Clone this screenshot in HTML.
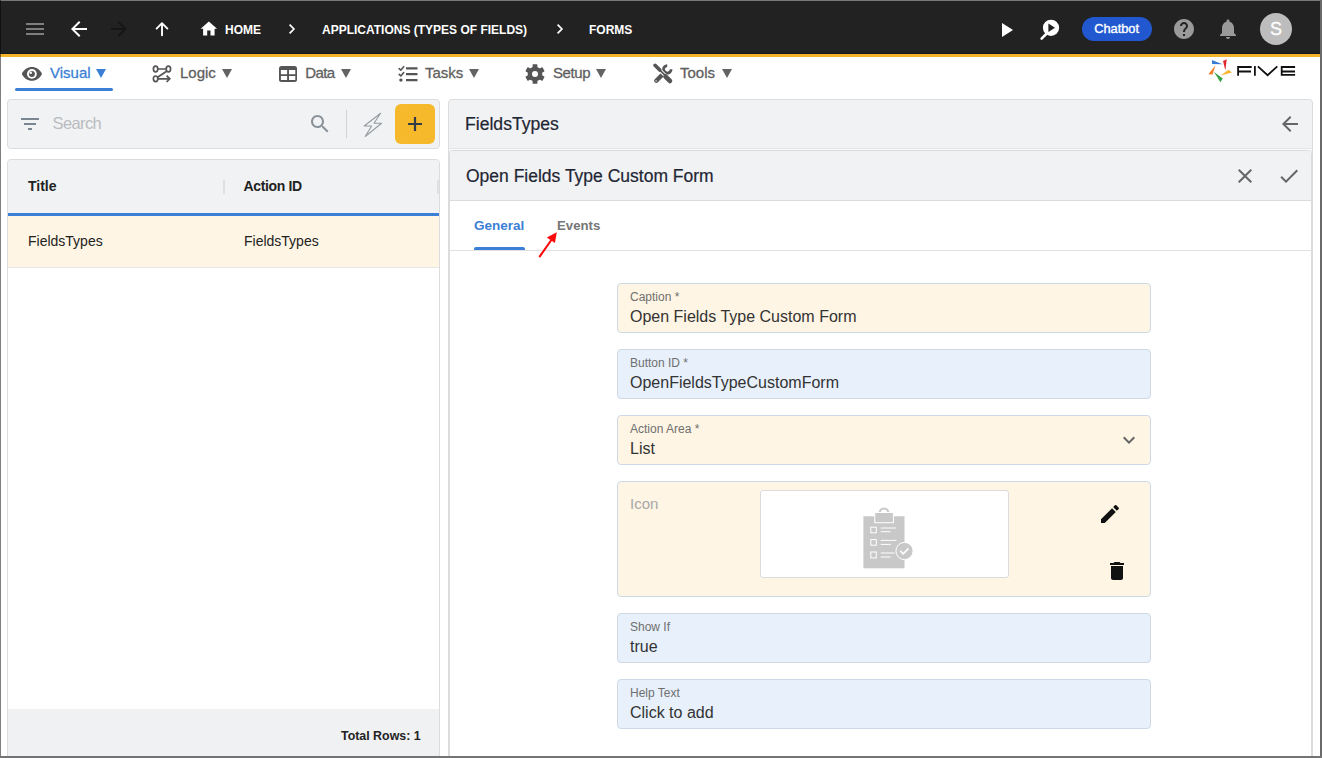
<!DOCTYPE html>
<html><head><meta charset="utf-8">
<style>
*{box-sizing:border-box;margin:0;padding:0}
html,body{width:1322px;height:758px;overflow:hidden;background:#fff;font-family:"Liberation Sans",sans-serif;position:relative}
.a{position:absolute}
.t{position:absolute;white-space:nowrap;line-height:1}
#top{left:0;top:0;width:1322px;height:54px;background:#222222}
#ybar{left:0;top:54px;width:1322px;height:3px;background:#f5b52a}
.crumb{color:#fff;font-weight:bold;font-size:12px}
.nav{color:#606060;font-size:15px;-webkit-text-stroke:0.3px}
.tri{font-size:12px;color:#636363}
.card{background:#f1f2f4;border:1px solid #dcdcdc;border-radius:4px}
.field{position:absolute;left:617px;width:534px;height:50px;border:1px solid #cdd9e6;border-radius:4px}
.cream{background:#fef5e4}
.blue{background:#e7f0fb}
.lbl{position:absolute;left:12px;top:7px;font-size:12px;color:#6f6f6f;line-height:1;white-space:nowrap}
.val{position:absolute;left:12px;top:25px;font-size:16px;color:#333;line-height:1;white-space:nowrap}
</style></head><body>
<!-- top bar -->
<div id="top" class="a"></div>
<div id="ybar" class="a"></div>
<div class="a" style="left:0;top:53px;width:1322px;height:1px;background:#161a20"></div>

<!-- hamburger -->
<div class="a" style="left:26px;top:23px;width:18px;height:2px;background:#7e7e7e"></div>
<div class="a" style="left:26px;top:28px;width:18px;height:2px;background:#7e7e7e"></div>
<div class="a" style="left:26px;top:33px;width:18px;height:2px;background:#7e7e7e"></div>
<!-- back arrow -->
<svg class="a" style="left:67px;top:17px" width="24" height="24" viewBox="0 0 24 24"><path d="M20 11H7.83l5.59-5.59L12 4l-8 8 8 8 1.41-1.41L7.83 13H20v-2z" fill="#fff"/></svg>
<svg class="a" style="left:107px;top:17px" width="24" height="24" viewBox="0 0 24 24"><path d="M12 4l-1.41 1.41L16.17 11H4v2h12.17l-5.58 5.59L12 20l8-8z" fill="#161616"/></svg>
<svg class="a" style="left:150px;top:17px" width="24" height="24" viewBox="150 17 24 24"><path d="M162 23.5V35.3M156.6 28.6L162 23.2L167.4 28.6" stroke="#fff" stroke-width="1.9" fill="none" stroke-linecap="round" stroke-linejoin="round"/></svg>
<!-- home -->
<svg class="a" style="left:199.2px;top:19.1px" width="19.7" height="19.7" viewBox="0 0 24 24"><path d="M10 20v-6h4v6h5v-8h3L12 3 2 12h3v8z" fill="#fff"/></svg>
<div class="t crumb" style="left:225px;top:24px">HOME</div>
<svg class="a" style="left:286px;top:22px" width="12" height="14" viewBox="0 0 12 14"><path d="M3.6 2.7l4.3 4.3-4.3 4.3" stroke="#fff" stroke-width="1.7" fill="none"/></svg>
<div class="t crumb" style="left:322px;top:24px">APPLICATIONS (TYPES OF FIELDS)</div>
<svg class="a" style="left:554px;top:22px" width="12" height="14" viewBox="0 0 12 14"><path d="M3.6 2.7l4.3 4.3-4.3 4.3" stroke="#fff" stroke-width="1.7" fill="none"/></svg>
<div class="t crumb" style="left:589px;top:24px">FORMS</div>

<!-- right top icons -->
<svg class="a" style="left:1000px;top:21px" width="16" height="18" viewBox="0 0 16 18"><path d="M2 2v14l11-7z" fill="#fff"/></svg>
<svg class="a" style="left:1038px;top:16px" width="26" height="26" viewBox="1038 16 26 26"><circle cx="1051" cy="27.8" r="8.1" fill="#fff"/><path d="M1048.4 23.6v8.4l6.6-4.2z" fill="#222"/><path d="M1041.6 38.6l4.6-4.6" stroke="#fff" stroke-width="2.6" stroke-linecap="round"/></svg>
<div class="a" style="left:1082px;top:17px;width:70px;height:24px;border-radius:12px;background:#2158d0"></div>
<div class="t" style="left:1094.2px;top:23.4px;font-size:12.8px;-webkit-text-stroke:0.35px #fff;color:#fff">Chatbot</div>
<svg class="a" style="left:1172px;top:17px" width="24" height="24" viewBox="0 0 24 24"><path fill="#9a9a9a" d="M12 2C6.48 2 2 6.48 2 12s4.48 10 10 10 10-4.48 10-10S17.52 2 12 2zm1 17h-2v-2h2v2zm2.07-7.75l-.9.92C13.45 12.9 13 13.5 13 15h-2v-.5c0-1.1.45-2.1 1.17-2.83l1.24-1.26c.37-.36.59-.86.59-1.41 0-1.1-.9-2-2-2s-2 .9-2 2H8c0-2.21 1.79-4 4-4s4 1.79 4 4c0 .88-.36 1.68-.93 2.25z"/></svg>
<svg class="a" style="left:1216px;top:17px" width="24" height="24" viewBox="0 0 24 24"><path d="M12 22c1.1 0 2-.9 2-2h-4c0 1.1.9 2 2 2zm6-6v-5c0-3.07-1.64-5.64-4.5-6.32V4c0-.83-.67-1.5-1.5-1.5s-1.5.67-1.5 1.5v.68C7.63 5.36 6 7.92 6 11v5l-2 2v1h16v-1l-2-2z" fill="#9a9a9a"/></svg>
<div class="a" style="left:1260px;top:13px;width:32px;height:32px;border-radius:50%;background:#bdbdbd"></div>
<div class="t" style="left:1270px;top:20px;font-size:18px;color:#fff;-webkit-text-stroke:0.3px #fff">S</div>

<!-- logo -->
<svg class="a" style="left:1204px;top:56px" width="100" height="32" viewBox="1204 56 100 32">
<g transform="translate(1204 56)">
<path d="M7.9 4L8.1 8.1L18.6 8.3Z" fill="#3a7bd5"/>
<path d="M19 4.9L22.7 3.2L21.4 14.4Z" fill="#e0282c"/>
<path d="M24.5 13.8L27.9 16.4L16.6 19.6Z" fill="#f6b52b"/>
<path d="M10.1 16L18.8 22.5L16.4 26.3Z" fill="#39a247"/>
<path d="M11.5 9.3L4.4 18.2L8.5 18.6Z" fill="#f47a22"/>
</g>
<g fill="none" stroke="#111" stroke-width="1.8">
<path d="M1238.1 75.8V67H1251.7M1238.1 71.5H1251"/>
<path d="M1254.9 66.1V75.8"/>
<path d="M1257.9 66.3L1267.6 75.2L1277.3 66.3"/>
<path d="M1295.1 67H1281.7V74.9H1295.1M1281.7 71.5H1295"/>
</g>
</svg>
<!-- nav row -->
<svg class="a" style="left:20px;top:62px" width="24" height="24" viewBox="20 62 24 24">
<path d="M21.8 73.9C23.8 69.8 27.7 67.1 31.9 67.1S40 69.8 42 73.9C40 78 36.1 80.7 31.9 80.7S23.8 78 21.8 73.9Z" fill="#555"/>
<circle cx="31.9" cy="73.9" r="4.9" fill="#fff"/>
<circle cx="31.9" cy="73.9" r="3.0" fill="#555"/>
<circle cx="30.7" cy="72.7" r="1.3" fill="#fff"/>
</svg>
<div class="t nav" style="left:50px;top:65px;color:#3b7fd6">Visual</div>
<svg class="a" style="left:96px;top:69px" width="10" height="9" viewBox="0 0 10 9"><path d="M0 0H10L5 9z" fill="#3b7fd6"/></svg>
<div class="a" style="left:15px;top:88px;width:98px;height:3px;border-radius:2px;background:#3b7fd6"></div>

<div class="t nav" style="left:180px;top:65px">Logic</div>
<svg class="a" style="left:221.5px;top:69px" width="10" height="9" viewBox="0 0 10 9"><path d="M0 0H10L5 9z" fill="#636363"/></svg>
<div class="t nav" style="left:305.2px;top:65px;letter-spacing:-0.6px">Data</div>
<svg class="a" style="left:341.2px;top:69px" width="10" height="9" viewBox="0 0 10 9"><path d="M0 0H10L5 9z" fill="#636363"/></svg>
<div class="t nav" style="left:425px;top:65px">Tasks</div>
<svg class="a" style="left:469.4px;top:69px" width="10" height="9" viewBox="0 0 10 9"><path d="M0 0H10L5 9z" fill="#636363"/></svg>
<div class="t nav" style="left:553px;top:65px;letter-spacing:-0.4px">Setup</div>
<svg class="a" style="left:596.4px;top:69px" width="10" height="9" viewBox="0 0 10 9"><path d="M0 0H10L5 9z" fill="#636363"/></svg>
<div class="t nav" style="left:680px;top:65px">Tools</div>
<svg class="a" style="left:721.6px;top:69px" width="10" height="9" viewBox="0 0 10 9"><path d="M0 0H10L5 9z" fill="#636363"/></svg>


<!-- nav icons -->
<svg class="a" style="left:148px;top:60px" width="28" height="28" viewBox="148 60 28 28" fill="none" stroke="#555" stroke-width="1.7">
<ellipse cx="155.6" cy="69" rx="2.2" ry="2.8"/><ellipse cx="168.4" cy="69" rx="2.2" ry="2.8"/><ellipse cx="155.6" cy="78.8" rx="2.2" ry="2.8"/>
<path d="M157.8 69H166.2M166.6 71.2L157.6 77.2M157.8 78.8H169.5M166.6 75.6L169.8 78.8L166.6 82"/>
</svg>
<svg class="a" style="left:272px;top:60px" width="30" height="28" viewBox="272 60 30 28">
<path fill="#555" fill-rule="evenodd" d="M281.5 65.9h13a2.5 2.5 0 0 1 2.5 2.5v11a2.5 2.5 0 0 1-2.5 2.5h-13a2.5 2.5 0 0 1-2.5-2.5v-11a2.5 2.5 0 0 1 2.5-2.5zM280.9 70v4.2h6.2V70zM289 70v4.2h6.3V70zM280.9 75.9V80h6.2v-4.1zM289 75.9V80h6.3v-4.1z"/>
</svg>
<svg class="a" style="left:390px;top:60px" width="32" height="28" viewBox="390 60 32 28">
<path d="M399.2 68.6l1.6 1.6 2.9-3.5M399.2 74.4l1.6 1.6 2.9-3.5" stroke="#555" stroke-width="1.6" fill="none" stroke-linecap="round" stroke-linejoin="round"/>
<circle cx="400.9" cy="80.1" r="1.7" fill="#555"/>
<path d="M406 68.3h11.5M406 74.2h11.5M406 80.1h11.5" stroke="#555" stroke-width="2.2"/>
</svg>
<svg class="a" style="left:518px;top:58px" width="34" height="32" viewBox="518 58 34 32">
<g fill="#555" transform="translate(535 74)">
<circle r="7.3"/>
<rect x="-2.4" y="-9.8" width="4.8" height="4" rx="0.6"/>
<rect x="-2.4" y="-9.8" width="4.8" height="4" rx="0.6" transform="rotate(60)"/>
<rect x="-2.4" y="-9.8" width="4.8" height="4" rx="0.6" transform="rotate(120)"/>
<rect x="-2.4" y="-9.8" width="4.8" height="4" rx="0.6" transform="rotate(180)"/>
<rect x="-2.4" y="-9.8" width="4.8" height="4" rx="0.6" transform="rotate(240)"/>
<rect x="-2.4" y="-9.8" width="4.8" height="4" rx="0.6" transform="rotate(300)"/>
</g>
<circle cx="535" cy="74" r="3" fill="#fff"/>
</svg>
<svg class="a" style="left:645px;top:58px" width="35" height="32" viewBox="645 58 35 32">
<g stroke="#555" fill="none">
<path d="M667.2 65.6A3.8 3.8 0 1 0 671.1 69.3" stroke-width="2.7"/>
<path d="M656.3 80.7L664.5 72.5" stroke-width="4.4" stroke-linecap="round"/>
</g>
<circle cx="656.1" cy="80.9" r="0.8" fill="#ccc"/>
<g stroke="#fff" fill="none">
<path d="M659.6 69.9L665.6 75.9" stroke-width="3.6"/>
</g>
<g stroke="#555" fill="none">
<path d="M655 65.3L659.8 70.1" stroke-width="3.6" stroke-linecap="round"/>
<path d="M659.6 69.9L665.6 75.9" stroke-width="1.6"/>
<path d="M665.6 76.6L669.9 80.9" stroke-width="4.8" stroke-linecap="round"/>
</g>
</svg>

<!-- left search card -->
<div class="a card" style="left:7px;top:99px;width:433px;height:50px"></div>
<div class="t" style="left:52.5px;top:115.3px;font-size:16.5px;letter-spacing:-0.6px;color:#b9bcc0">Search</div>
<!-- search card icons -->
<svg class="a" style="left:18px;top:112px" width="24" height="24" viewBox="0 0 24 24"><path d="M10 18h4v-2h-4v2zM3 6v2h18V6H3zm3 7h12v-2H6v2z" fill="#7b8691"/></svg>
<svg class="a" style="left:308px;top:112px" width="24" height="24" viewBox="0 0 24 24"><path d="M15.5 14h-.79l-.28-.27C15.41 12.59 16 11.11 16 9.5 16 5.91 13.09 3 9.5 3S3 5.91 3 9.5 5.91 16 9.5 16c1.61 0 3.09-.59 4.23-1.57l.27.28v.79l5 4.99L20.49 19l-4.99-5zm-6 0C7.01 14 5 11.99 5 9.5S7.01 5 9.5 5 14 7.01 14 9.5 11.99 14 9.5 14z" fill="#8a9299"/></svg>
<div class="a" style="left:346px;top:110px;width:1px;height:28px;background:#cfd2d6"></div>
<svg class="a" style="left:355px;top:105px" width="35" height="37" viewBox="355 105 35 37"><path d="M380.6 113.3L364.2 126H371.6L365.2 136.5L381.6 123.3H374Z" fill="none" stroke="#959ba1" stroke-width="1.1" stroke-linejoin="round"/></svg>

<div class="a" style="left:395px;top:104px;width:40px;height:40px;border-radius:6px;background:#f6b92b"></div>
<svg class="a" style="left:395px;top:104px" width="40" height="40" viewBox="0 0 40 40"><path d="M20 13v14M13 20h14" stroke="#333c46" stroke-width="2.2"/></svg>


<!-- table card -->
<div class="a" style="left:7px;top:159px;width:433px;height:600px;border:1px solid #dcdcdc;border-radius:4px 4px 0 0;background:#fff"></div>
<div class="a" style="left:8px;top:160px;width:431px;height:53px;background:#f1f2f4;border-radius:4px 4px 0 0"></div>
<div class="a" style="left:8px;top:213px;width:431px;height:3px;background:#3b7fd6"></div>
<div class="a" style="left:8px;top:216px;width:431px;height:52px;background:#fef5e4;border-bottom:1px solid #e6e6e6"></div>
<div class="t" style="left:28px;top:179px;font-size:14px;font-weight:bold;color:#222">Title</div>
<div class="a" style="left:223px;top:180px;width:2px;height:14px;background:#e0e0e0"></div>
<div class="t" style="left:243.5px;top:179px;font-size:14px;letter-spacing:-0.35px;font-weight:bold;color:#222">Action ID</div>
<div class="a" style="left:437px;top:180px;width:2px;height:14px;background:#e0e0e0"></div>
<div class="t" style="left:28px;top:234px;font-size:14px;color:#222">FieldsTypes</div>
<div class="t" style="left:244px;top:234px;font-size:14px;color:#222">FieldsTypes</div>
<div class="a" style="left:8px;top:709px;width:431px;height:47px;background:#eff1f2"></div>
<div class="t" style="left:341px;top:730px;font-size:12.4px;font-weight:bold;color:#222">Total Rows: 1</div>

<!-- right panel -->
<div class="a card" style="left:448px;top:99px;width:865px;height:660px;border-radius:4px 4px 0 0"></div>
<div class="t" style="left:465px;top:116px;font-size:17.6px;color:#1f2633;-webkit-text-stroke:0.2px">FieldsTypes</div>
<div class="a" style="left:449px;top:148px;width:863px;height:1px;background:#e2e4e7"></div>
<div class="a" style="left:449px;top:149px;width:863px;height:1px;background:#fbfbfb"></div>
<div class="a" style="left:449px;top:150px;width:863px;height:608px;background:#fff;border:1px solid #dcdcdc;border-radius:4px 4px 0 0"></div>
<div class="a" style="left:450px;top:151px;width:861px;height:50px;background:#f1f2f4;border-bottom:1px solid #dcdcdc;border-radius:3px 3px 0 0"></div>
<div class="t" style="left:466px;top:168px;font-size:17.5px;color:#1f2633;-webkit-text-stroke:0.2px">Open Fields Type Custom Form</div>
<div class="t" style="left:474px;top:218.5px;font-size:13.5px;font-weight:bold;color:#3b7fd6">General</div>
<div class="t" style="left:557px;top:218.5px;font-size:13.2px;font-weight:bold;color:#767676">Events</div>
<div class="a" style="left:474px;top:247px;width:51px;height:3px;border-radius:2px 2px 0 0;background:#3b7fd6"></div>
<div class="a" style="left:450px;top:250px;width:861px;height:1px;background:#e0e0e0"></div>

<svg class="a" style="left:530px;top:225px" width="35" height="40" viewBox="530 225 35 40">
<path d="M539.8 256.4L551 240.5" stroke="#fa0a0a" stroke-width="2.1" stroke-linecap="round"/>
<path d="M556.8 232.2L546.8 237.5L554.9 243Z" fill="#fa0a0a"/>
</svg>
<!-- fields -->
<div class="field cream" style="top:283px"><div class="lbl">Caption *</div><div class="val">Open Fields Type Custom Form</div></div>
<div class="field blue" style="top:349px"><div class="lbl">Button ID *</div><div class="val">OpenFieldsTypeCustomForm</div></div>
<div class="field cream" style="top:415px"><div class="lbl">Action Area *</div><div class="val">List</div></div>
<div class="field cream" style="top:481px;height:116px"><div class="lbl" style="top:14px;font-size:15px;color:#a8a8a8">Icon</div></div>
<div class="a" style="left:760px;top:490px;width:249px;height:88px;background:#fff;border:1px solid #dcdcdc;border-radius:3px"></div>
<svg class="a" style="left:850px;top:500px" width="70" height="75" viewBox="850 500 70 75">
<path d="M879.7 512.8a4.3 4.3 0 0 1 8.6 0" fill="none" stroke="#c8c8c8" stroke-width="2.2"/>
<rect x="863.4" y="516.3" width="41.1" height="52" fill="#c8c8c8"/>
<rect x="874.8" y="512.5" width="18.6" height="10.2" fill="#c8c8c8" stroke="#fff" stroke-width="1"/>
<g fill="none" stroke="#fff" stroke-width="1">
<rect x="870.8" y="527.2" width="5.5" height="5.6"/>
<rect x="870.8" y="539.6" width="5.5" height="5.6"/>
<rect x="870.8" y="552" width="5.5" height="5.9"/>
</g>
<g stroke="#fff" stroke-width="1">
<path d="M880.7 528H896M880.7 531.7H890.5M880.7 540.4H896.5M880.7 544.4H890.8M880.7 553H894.5M880.7 557H890.5"/>
</g>
<circle cx="904.5" cy="551" r="8.6" fill="#c8c8c8" stroke="#fff" stroke-width="1"/>
<path d="M900.2 550.8l3 3 5.3-5.4" fill="none" stroke="#fff" stroke-width="1.6"/>
</svg>
<div class="field blue" style="top:613px"><div class="lbl">Show If</div><div class="val">true</div></div>
<div class="field blue" style="top:679px"><div class="lbl">Help Text</div><div class="val">Click to add</div></div>

<svg class="a" style="left:1278px;top:112px" width="24" height="24" viewBox="0 0 24 24"><path d="M20 11H7.83l5.59-5.59L12 4l-8 8 8 8 1.41-1.41L7.83 13H20v-2z" fill="#666"/></svg>
<svg class="a" style="left:1233px;top:164px" width="24" height="24" viewBox="0 0 24 24"><path d="M19 6.41L17.59 5 12 10.59 6.41 5 5 6.41 10.59 12 5 17.59 6.41 19 12 13.41 17.59 19 19 17.59 13.41 12z" fill="#666"/></svg>
<svg class="a" style="left:1277px;top:164px" width="24" height="24" viewBox="0 0 24 24"><path d="M9 16.17L4.83 12l-1.42 1.41L9 19 21 7l-1.41-1.41z" fill="#666"/></svg>
<svg class="a" style="left:1117px;top:428px" width="24" height="24" viewBox="0 0 24 24"><path d="M16.59 8.59L12 13.17 7.41 8.59 6 10l6 6 6-6z" fill="#666"/></svg>
<svg class="a" style="left:1098px;top:502px" width="24" height="24" viewBox="0 0 24 24"><path d="M3 17.25V21h3.75L17.81 9.94l-3.75-3.75L3 17.25zM20.71 7.04c.39-.39.39-1.02 0-1.41l-2.34-2.34c-.39-.39-1.02-.39-1.41 0l-1.83 1.83 3.75 3.75 1.83-1.83z" fill="#111"/></svg>
<svg class="a" style="left:1105px;top:559px" width="24" height="24" viewBox="0 0 24 24"><path d="M6 19c0 1.1.9 2 2 2h8c1.1 0 2-.9 2-2V7H6v12zM19 4h-3.5l-1-1h-5l-1 1H5v2h14V4z" fill="#111"/></svg>
<!-- frame -->
<div class="a" style="left:0;top:0;width:1322px;height:1px;background:#777"></div>
<div class="a" style="left:0;top:0;width:1px;height:758px;background:rgba(0,0,0,0.5)"></div>
<div class="a" style="left:1320px;top:0;width:2px;height:758px;background:#6a6a6a"></div>
<div class="a" style="left:0;top:756px;width:1322px;height:2px;background:#747474"></div>
</body></html>
